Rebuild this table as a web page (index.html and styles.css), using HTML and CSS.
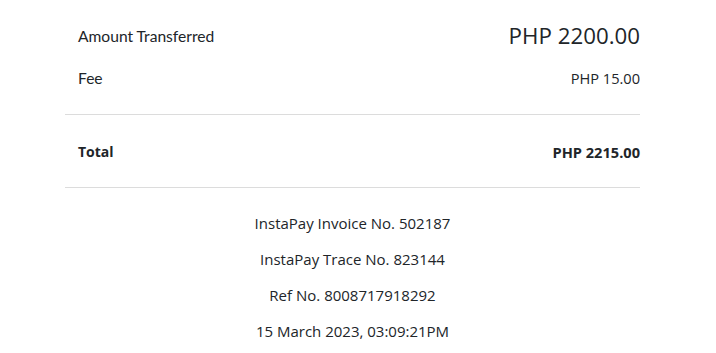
FILE: index.html
```html
<!DOCTYPE html>
<html>
<head>
<meta charset="utf-8">
<link rel="stylesheet" href="styles.css">
</head>
<body>
<div class="receipt">
  <div class="rows">
    <div class="row row-amount">
      <span class="label">Amount Transferred</span>
      <span class="value big">PHP 2200.00</span>
    </div>
    <div class="row row-fee">
      <span class="label">Fee</span>
      <span class="value">PHP 15.00</span>
    </div>
  </div>
  <div class="row row-total">
    <span class="label strong">Total</span>
    <span class="value strong">PHP 2215.00</span>
  </div>
  <div class="meta">
    <p>InstaPay Invoice No. 502187</p>
    <p>InstaPay Trace No. 823144</p>
    <p>Ref No. 8008717918292</p>
    <p>15 March 2023, 03:09:21PM</p>
  </div>
</div>
</body>
</html>
```
FILE: styles.css
```css
* { box-sizing: border-box; }
html, body { margin: 0; padding: 0; background: #fff; }
body { color: #212529; font-family: "Open Sans", sans-serif; }
.receipt { width: 575px; margin-left: 65px; }
.rows { padding-top: 20px; padding-bottom: 26px; border-bottom: 1px solid #dcdcdc; }
.row { display: flex; justify-content: space-between; align-items: center; padding-left: 13px; }
.label { font-family: "Lato", sans-serif; font-size: 15.6px; line-height: 20px; }
.value { font-size: 14.6px; line-height: 20px; }
.big { font-size: 22.3px; line-height: 32px; }
.row-amount { height: 32px; }
.row-fee { height: 20px; margin-top: 16px; }
.row-total { height: 73px; padding-top: 27px; padding-bottom: 25px; border-bottom: 1px solid #dcdcdc; }
.strong { font-weight: 700; font-size: 14.6px; }
.row-total .label.strong { font-family: "Open Sans", sans-serif; font-size: 14px; }
.meta { text-align: center; padding-top: 17px; }
.meta p { margin: 0; font-size: 15px; line-height: 36px; }
```
